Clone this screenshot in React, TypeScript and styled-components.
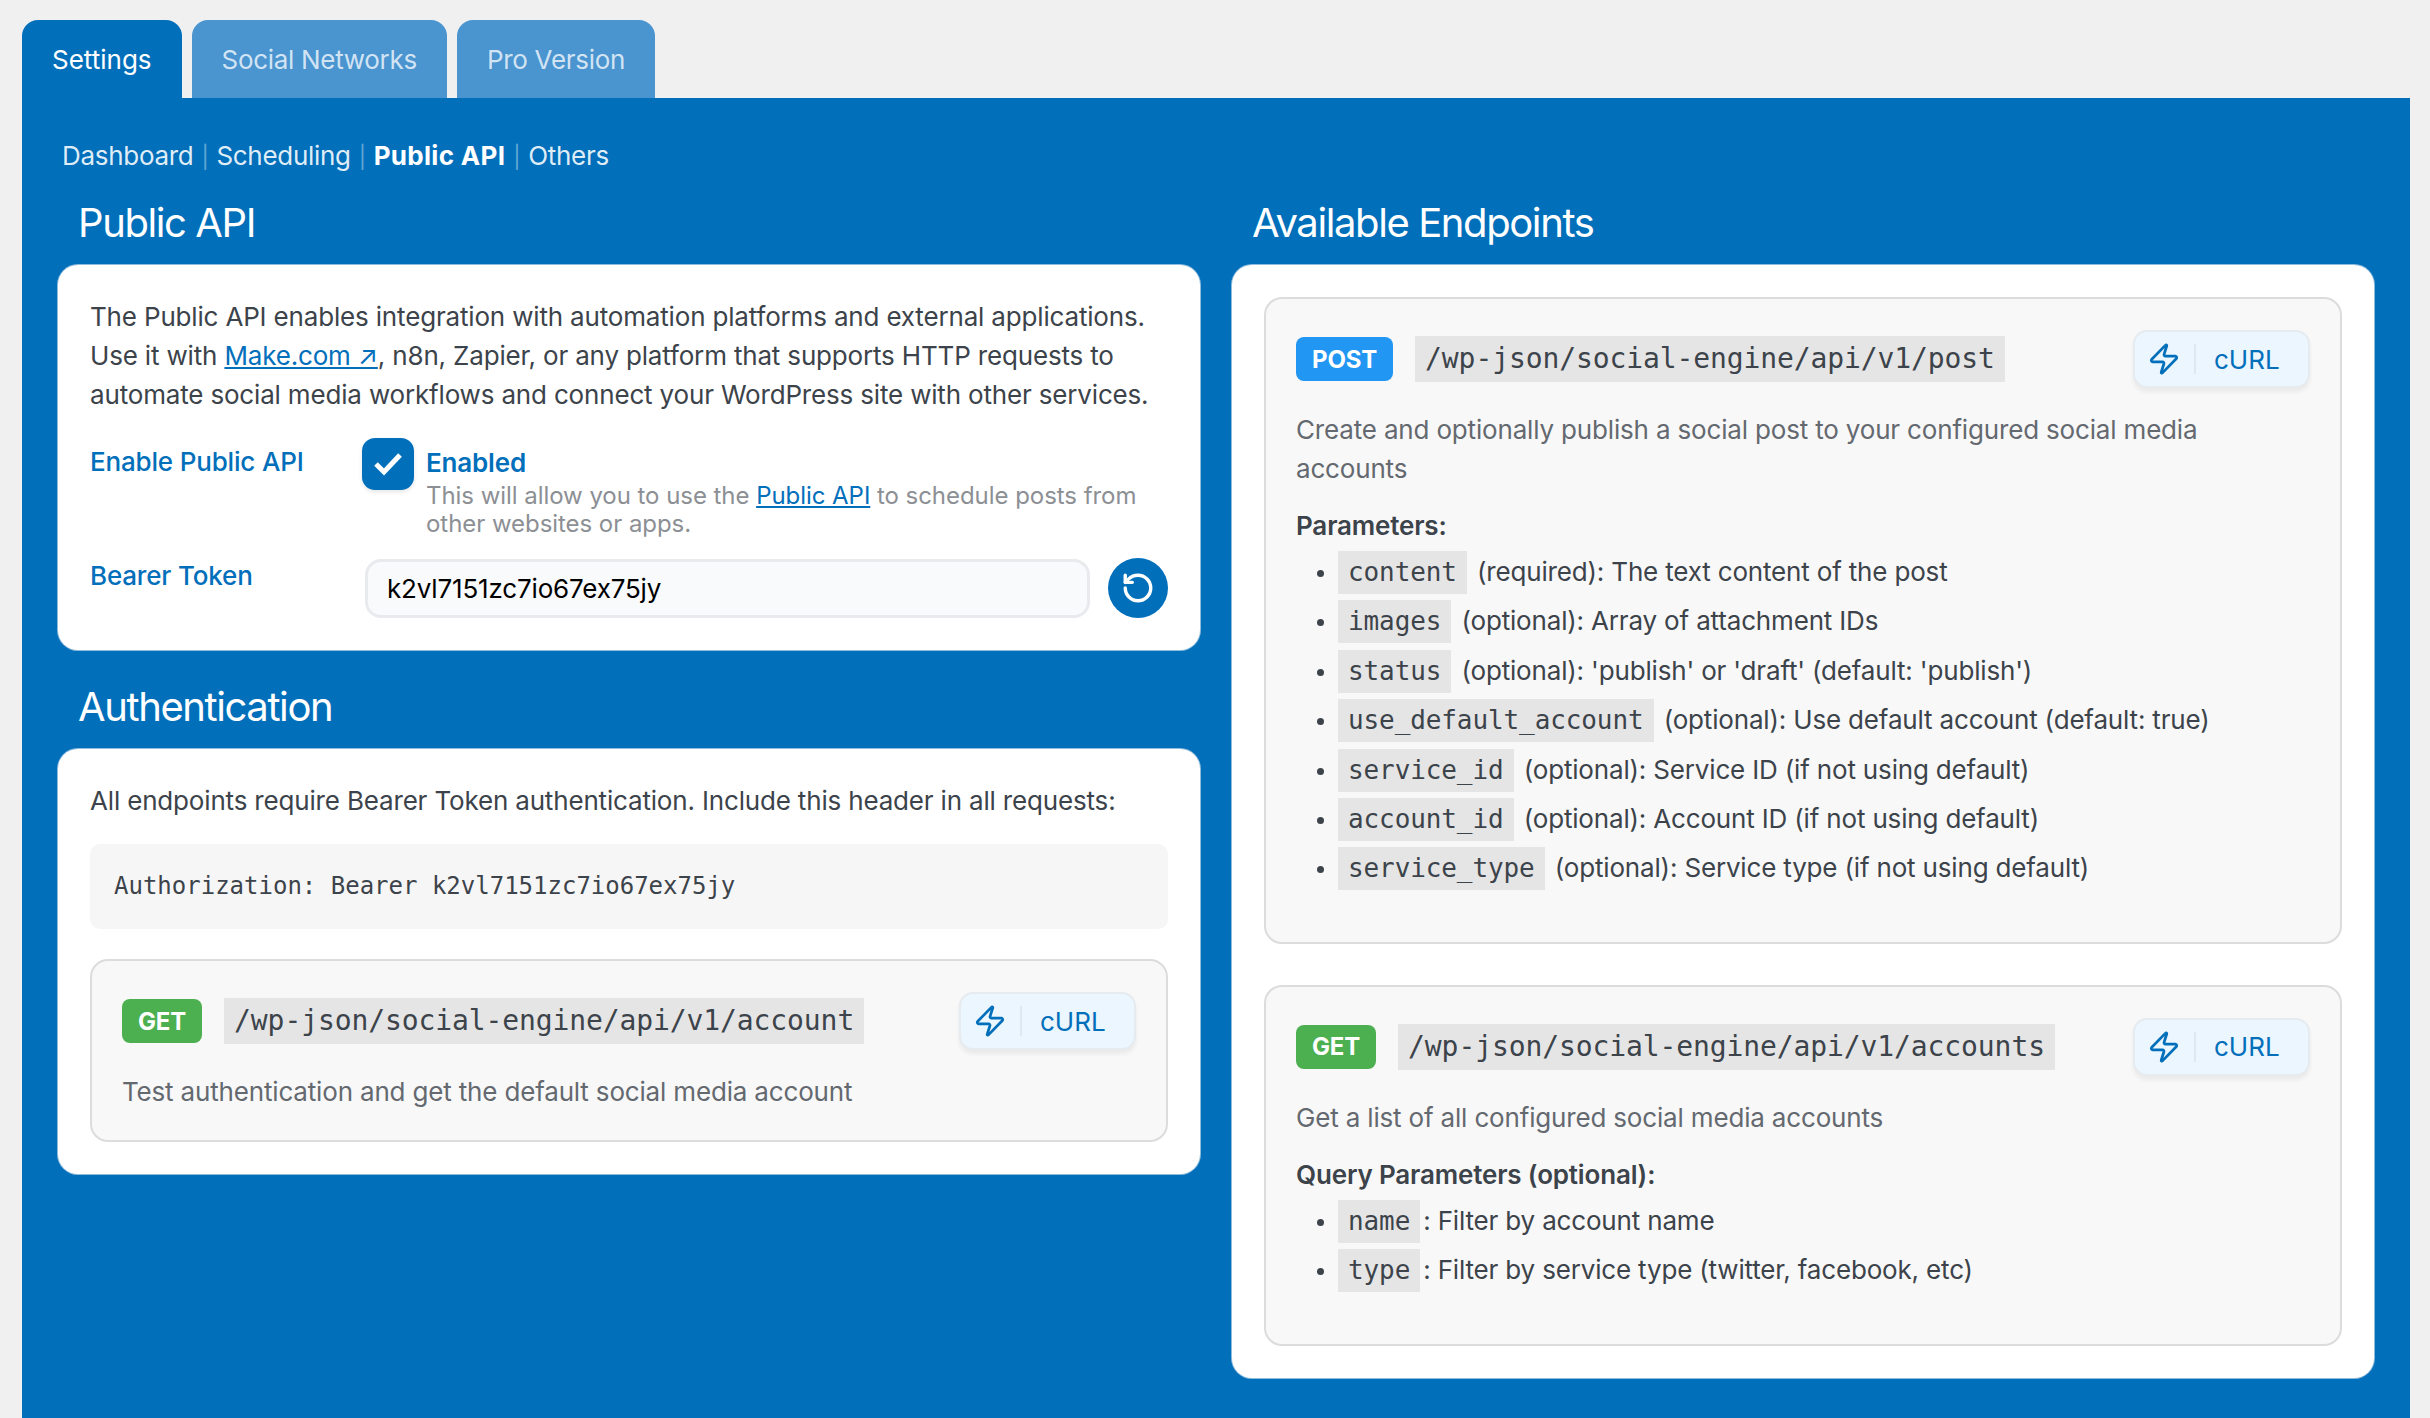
import React from 'react'
import styled, { createGlobalStyle } from 'styled-components'
import { RotateCcw, Zap } from 'lucide-react'

const GlobalStyle = createGlobalStyle`
  html, body {
    margin: 0;
    height: 100%;
    background: #f0f0f1;
  }
  body {
    font-family: Inter, "Liberation Sans", sans-serif;
    font-size: 26px;
    line-height: 39px;
    letter-spacing: -0.17px;
    color: #3c434a;
    overflow: hidden;
  }
  * {
    box-sizing: border-box;
  }
`

const Page = styled.div`
  display: flex;
  flex-direction: column;
  height: 1418px;
  padding: 20px 20px 0 22px;
`

const Tabs = styled.div`
  display: flex;
  gap: 10px;
  height: 78px;
`

const Tab = styled.div<{ $active?: boolean }>`
  display: flex;
  align-items: center;
  padding: 0 30px;
  border-radius: 16px 16px 0 0;
  background: ${({ $active }) => ($active ? '#026fbb' : '#4a94cf')};
  color: ${({ $active }) => ($active ? '#fff' : 'rgba(255, 255, 255, 0.75)')};
  letter-spacing: ${({ $active }) => ($active ? '0' : '-0.3px')};
`

const Panel = styled.div`
  flex: 1;
  padding: 38px 36px 0;
  background: #026fbb;
`

const SubNav = styled.div`
  margin-left: 4px;
  color: rgba(255, 255, 255, 0.88);
  letter-spacing: -0.3px;
`

const SubLink = styled.span<{ $active?: boolean }>`
  font-weight: ${({ $active }) => ($active ? 700 : 400)};
  color: ${({ $active }) => ($active ? '#fff' : 'inherit')};
  letter-spacing: ${({ $active }) => ($active ? '0.3px' : 'inherit')};
`

const Separator = styled.span`
  margin: 0 8px;
  font-size: 22px;
  line-height: 1;
  color: rgba(255, 255, 255, 0.4);
`

const Columns = styled.div`
  display: grid;
  grid-template-columns: 1142px 1142px;
  gap: 32px;
  margin-top: 22px;
`

const Column = styled.div`
  display: flex;
  flex-direction: column;
`

const SectionTitle = styled.h2<{ $spaced?: boolean }>`
  margin: ${({ $spaced }) => ($spaced ? '31px' : '0')} 0 16px;
  padding-left: 20px;
  font-size: 40px;
  font-weight: 400;
  line-height: 52px;
  letter-spacing: -1.4px;
  color: #fff;
`

const Card = styled.div`
  padding: 32px;
  background: #fff;
  border-radius: 20px;
  box-shadow: 0 0 0 1px rgba(240, 240, 241, 0.6);
`

const Paragraph = styled.p`
  margin: 0;
`

const Link = styled.a`
  color: #026fbb;
  text-decoration: underline;
`

const FieldRow = styled.div`
  display: grid;
  grid-template-columns: 272px 1fr;
  margin-top: 24px;
`

const TokenRow = styled(FieldRow)`
  margin-top: 20px;
`

const FieldLabel = styled.label<{ $offset: number }>`
  margin-top: ${({ $offset }) => $offset}px;
  color: #026fbb;
  font-weight: 500;
`

const ToggleWrap = styled.div`
  display: flex;
  gap: 12px;
`

const CheckBox = styled.span`
  flex: none;
  display: flex;
  align-items: center;
  justify-content: center;
  width: 52px;
  height: 52px;
  border-radius: 13px;
  background: #026fbb;
  box-shadow: 0 2px 4px rgba(0, 0, 0, 0.1);
  color: #fff;
`

const ToggleText = styled.div`
  padding-top: 5px;
`

const ToggleTitle = styled.div`
  color: #026fbb;
  font-weight: 600;
`

const Hint = styled.div`
  font-size: 24px;
  line-height: 28px;
  letter-spacing: -0.05px;
  color: #8c8f94;
`

const TokenWrap = styled.div`
  display: flex;
  align-items: center;
  gap: 18px;
  padding-left: 3px;
`

const TokenInput = styled.div`
  flex: 1;
  height: 59px;
  padding: 0 19px;
  display: flex;
  align-items: center;
  border: 3px solid #e8eaed;
  border-radius: 16px;
  background: #f9fafb;
  color: #000;
`

const RoundButton = styled.button`
  flex: none;
  display: flex;
  align-items: center;
  justify-content: center;
  width: 60px;
  height: 60px;
  padding: 0;
  border: 0;
  border-radius: 50%;
  background: #026fbb;
  color: #fff;
`

const CodeBlock = styled.div`
  margin-top: 24px;
  padding: 23px 24px;
  height: 85px;
  border-radius: 10px;
  background: #f6f6f6;
  font-family: "DejaVu Sans Mono", "Liberation Mono", monospace;
  font-size: 24px;
  letter-spacing: 0;
`

const Endpoint = styled.div<{ $top?: number; $bottom?: number }>`
  margin-top: ${({ $top }) => $top ?? 0}px;
  padding: 30px 30px ${({ $bottom }) => $bottom ?? 30}px;
  border: 2px solid #dcdcde;
  border-radius: 18px;
  background: #f8f8f8;
`

const EndpointHead = styled.div`
  display: flex;
  align-items: center;
  height: 60px;
`

const Method = styled.span<{ $color: string }>`
  flex: none;
  height: 44px;
  padding: 0 16px;
  display: flex;
  align-items: center;
  margin-right: 22px;
  border-radius: 8px;
  background: ${({ $color }) => $color};
  color: #fff;
  font-size: 24px;
  font-weight: 700;
`

const Path = styled.code`
  height: 46px;
  padding: 0 10px;
  background: #e5e5e5;
  font-family: "DejaVu Sans Mono", "Liberation Mono", monospace;
  font-size: 28px;
  line-height: 46px;
  letter-spacing: -0.1px;
`

const CurlButton = styled.button`
  flex: none;
  display: flex;
  align-items: center;
  width: 177px;
  height: 58px;
  margin-left: auto;
  padding: 0 0 0 12px;
  border: 2px solid #e6ebf0;
  border-radius: 14px;
  background: #ebf6fe;
  box-shadow: 0 4px 4px rgba(0, 0, 0, 0.06);
  color: #026fbb;
  font-family: inherit;
  font-size: 26px;
`

const CurlDivider = styled.span`
  width: 2px;
  height: 30px;
  margin: 0 18px 0 13px;
  background: #e0e8ef;
`

const EndpointText = styled.p`
  margin: 21px 0 0;
  color: #646970;
`

const ParamsTitle = styled.div`
  margin-top: 18px;
  font-weight: 600;
`

const ParamList = styled.ul`
  margin: 7px 0 0;
  padding: 0 0 0 42px;
`

const Param = styled.li`
  margin-bottom: 9.4px;

  &::marker {
    font-size: 22px;
  }
`

const ParamCode = styled.code`
  margin-right: 3px;
  padding: 6px 10px 7px;
  background: #e5e5e5;
  font-family: "DejaVu Sans Mono", "Liberation Mono", monospace;
  font-size: 26px;
  letter-spacing: -0.1px;
`

type ParamItem = { name: string; text: string }

const postParams: ParamItem[] = [
  { name: 'content', text: ' (required): The text content of the post' },
  { name: 'images', text: ' (optional): Array of attachment IDs' },
  { name: 'status', text: " (optional): 'publish' or 'draft' (default: 'publish')" },
  { name: 'use_default_account', text: ' (optional): Use default account (default: true)' },
  { name: 'service_id', text: ' (optional): Service ID (if not using default)' },
  { name: 'account_id', text: ' (optional): Account ID (if not using default)' },
  { name: 'service_type', text: ' (optional): Service type (if not using default)' },
]

const queryParams: ParamItem[] = [
  { name: 'name', text: ': Filter by account name' },
  { name: 'type', text: ': Filter by service type (twitter, facebook, etc)' },
]

const CheckMark = () => (
  <svg width="30" height="24" viewBox="0 0 30 24" fill="none" stroke="currentColor" strokeWidth="5">
    <polyline points="3,12 11,20 27,3" />
  </svg>
)

const Head = ({ method, color, path }: { method: string; color: string; path: string }) => (
  <EndpointHead>
    <Method $color={color}>{method}</Method>
    <Path>{path}</Path>
    <CurlButton>
      <Zap size={34} strokeWidth={1.9} />
      <CurlDivider />
      cURL
    </CurlButton>
  </EndpointHead>
)

const Params = ({ items }: { items: ParamItem[] }) => (
  <ParamList>
    {items.map((item) => (
      <Param key={item.name}>
        <ParamCode>{item.name}</ParamCode>
        {item.text}
      </Param>
    ))}
  </ParamList>
)

export default function App() {
  return (
    <>
      <GlobalStyle />
      <Page>
        <Tabs>
          <Tab $active>Settings</Tab>
          <Tab>Social Networks</Tab>
          <Tab>Pro Version</Tab>
        </Tabs>
        <Panel>
          <SubNav>
            <SubLink>Dashboard</SubLink>
            <Separator>|</Separator>
            <SubLink>Scheduling</SubLink>
            <Separator>|</Separator>
            <SubLink $active>Public API</SubLink>
            <Separator>|</Separator>
            <SubLink>Others</SubLink>
          </SubNav>
          <Columns>
            <Column>
              <SectionTitle>Public API</SectionTitle>
              <Card>
                <Paragraph>
                  The Public API enables integration with automation platforms and external applications. Use it with{' '}
                  <Link>Make.com ↗</Link>, n8n, Zapier, or any platform that supports HTTP requests to automate social
                  media workflows and connect your WordPress site with other services.
                </Paragraph>
                <FieldRow>
                  <FieldLabel $offset={4}>Enable Public API</FieldLabel>
                  <ToggleWrap>
                    <CheckBox>
                      <CheckMark />
                    </CheckBox>
                    <ToggleText>
                      <ToggleTitle>Enabled</ToggleTitle>
                      <Hint>
                        This will allow you to use the <Link>Public API</Link> to schedule posts from other websites or
                        apps.
                      </Hint>
                    </ToggleText>
                  </ToggleWrap>
                </FieldRow>
                <TokenRow>
                  <FieldLabel $offset={-2}>Bearer Token</FieldLabel>
                  <TokenWrap>
                    <TokenInput>k2vl7151zc7io67ex75jy</TokenInput>
                    <RoundButton>
                      <RotateCcw size={34} strokeWidth={2.4} />
                    </RoundButton>
                  </TokenWrap>
                </TokenRow>
              </Card>
              <SectionTitle $spaced>Authentication</SectionTitle>
              <Card>
                <Paragraph>All endpoints require Bearer Token authentication. Include this header in all requests:</Paragraph>
                <CodeBlock>Authorization: Bearer k2vl7151zc7io67ex75jy</CodeBlock>
                <Endpoint $top={30} $bottom={29}>
                  <Head method="GET" color="#4caf50" path="/wp-json/social-engine/api/v1/account" />
                  <EndpointText>Test authentication and get the default social media account</EndpointText>
                </Endpoint>
              </Card>
            </Column>
            <Column>
              <SectionTitle>Available Endpoints</SectionTitle>
              <Card>
                <Endpoint $bottom={44}>
                  <Head method="POST" color="#2196f3" path="/wp-json/social-engine/api/v1/post" />
                  <EndpointText>Create and optionally publish a social post to your configured social media accounts</EndpointText>
                  <ParamsTitle>Parameters:</ParamsTitle>
                  <Params items={postParams} />
                </Endpoint>
                <Endpoint $top={41} $bottom={44}>
                  <Head method="GET" color="#4caf50" path="/wp-json/social-engine/api/v1/accounts" />
                  <EndpointText>Get a list of all configured social media accounts</EndpointText>
                  <ParamsTitle>Query Parameters (optional):</ParamsTitle>
                  <Params items={queryParams} />
                </Endpoint>
              </Card>
            </Column>
          </Columns>
        </Panel>
      </Page>
    </>
  )
}
